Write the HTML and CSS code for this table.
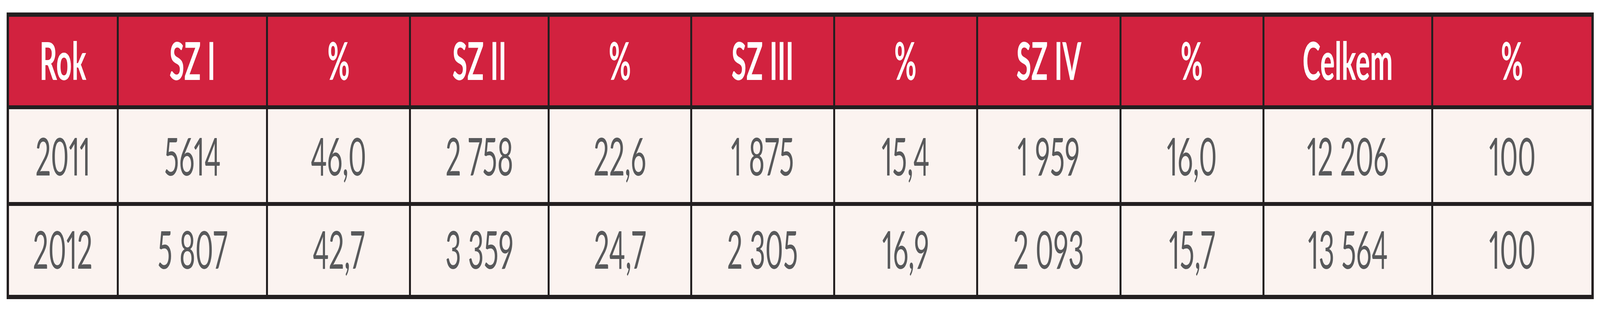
FILE: index.html
```html
<!DOCTYPE html>
<html lang="cs">
<head>
<meta charset="utf-8">
<title>Tabulka SZ</title>
<link rel="stylesheet" href="styles.css">
</head>
<body>
<table class="data">
  <colgroup>
    <col class="w-rok">
    <col class="w-sz1">
    <col class="w-p1">
    <col class="w-sz2">
    <col class="w-p2">
    <col class="w-sz3">
    <col class="w-p3">
    <col class="w-sz4">
    <col class="w-p4">
    <col class="w-tot">
    <col class="w-p5">
  </colgroup>
  <thead>
    <tr class="head">
      <th><span class="t">Rok</span></th><th><span class="t">SZ I</span></th><th><span class="t">%</span></th><th><span class="t">SZ II</span></th><th><span class="t">%</span></th><th><span class="t">SZ III</span></th><th><span class="t">%</span></th><th><span class="t">SZ IV</span></th><th><span class="t">%</span></th><th><span class="t">Celkem</span></th><th><span class="t">%</span></th>
    </tr>
  </thead>
  <tbody>
    <tr class="row-a">
      <td><span class="t">2011</span></td><td><span class="t">5614</span></td><td><span class="t">46,0</span></td><td><span class="t">2&nbsp;758</span></td><td><span class="t">22,6</span></td><td><span class="t">1&nbsp;875</span></td><td><span class="t">15,4</span></td><td><span class="t">1&nbsp;959</span></td><td><span class="t">16,0</span></td><td><span class="t">12&nbsp;206</span></td><td><span class="t">100</span></td>
    </tr>
    <tr class="row-b">
      <td><span class="t">2012</span></td><td><span class="t">5&nbsp;807</span></td><td><span class="t">42,7</span></td><td><span class="t">3&nbsp;359</span></td><td><span class="t">24,7</span></td><td><span class="t">2&nbsp;305</span></td><td><span class="t">16,9</span></td><td><span class="t">2&nbsp;093</span></td><td><span class="t">15,7</span></td><td><span class="t">13&nbsp;564</span></td><td><span class="t">100</span></td>
    </tr>
  </tbody>
</table>
<script src="fit.js"></script>
</body>
</html>
```

FILE: styles.css
```css
/* Horizontal unit: one pixel of the 7870px-wide design, fitted to the viewport */
:root {
  --u: calc(100vw / 7870);
  --sx: 0.52046;
}

html, body {
  margin: 0;
  padding: 0;
  background: #ffffff;
  overflow: hidden;
}

.data {
  margin: 32px 0 0 calc(32 * var(--u));
  width: calc(7807 * var(--u));
  table-layout: fixed;
  border-collapse: separate;
  border-spacing: calc(10 * var(--u)) 10px;
  border: 1px solid #231f20;
  background: #231f20;
  font-family: Lato, "Liberation Sans", sans-serif;
  font-size: 134px;
  font-variant-numeric: proportional-nums;
}

.w-rok { width: calc(530 * var(--u)); }
.w-sz1 { width: calc(725 * var(--u)); }
.w-p1  { width: calc(693 * var(--u)); }
.w-sz2 { width: calc(671 * var(--u)); }
.w-p2  { width: calc(692 * var(--u)); }
.w-sz3 { width: calc(692 * var(--u)); }
.w-p3  { width: calc(693 * var(--u)); }
.w-sz4 { width: calc(695 * var(--u)); }
.w-p4  { width: calc(694 * var(--u)); }
.w-tot { width: calc(819 * var(--u)); }
.w-p5  { width: calc(778 * var(--u)); }

.data th,
.data td {
  padding: 0;
  text-align: center;
  vertical-align: middle;
  line-height: 1;
  white-space: nowrap;
  box-sizing: border-box;
}

/* text is compressed horizontally by the same factor as the layout */
.t {
  display: inline-block;
  margin: 0 -60px;
  transform: scaleX(var(--sx));
}

.data th {
  height: 227px;
  padding-bottom: 6px;
  background: #d2223f;
  color: #ffffff;
  font-weight: 700;
}

.data td {
  background: #fbf3f0;
  color: #58595b;
  font-weight: 400;
}

.row-a td { height: 238px; }
.row-b td { height: 228px; padding-bottom: 8px; }
```

FILE: fit.js
```js
document.documentElement.style.setProperty('--sx', String(window.innerWidth / 7870));
```
